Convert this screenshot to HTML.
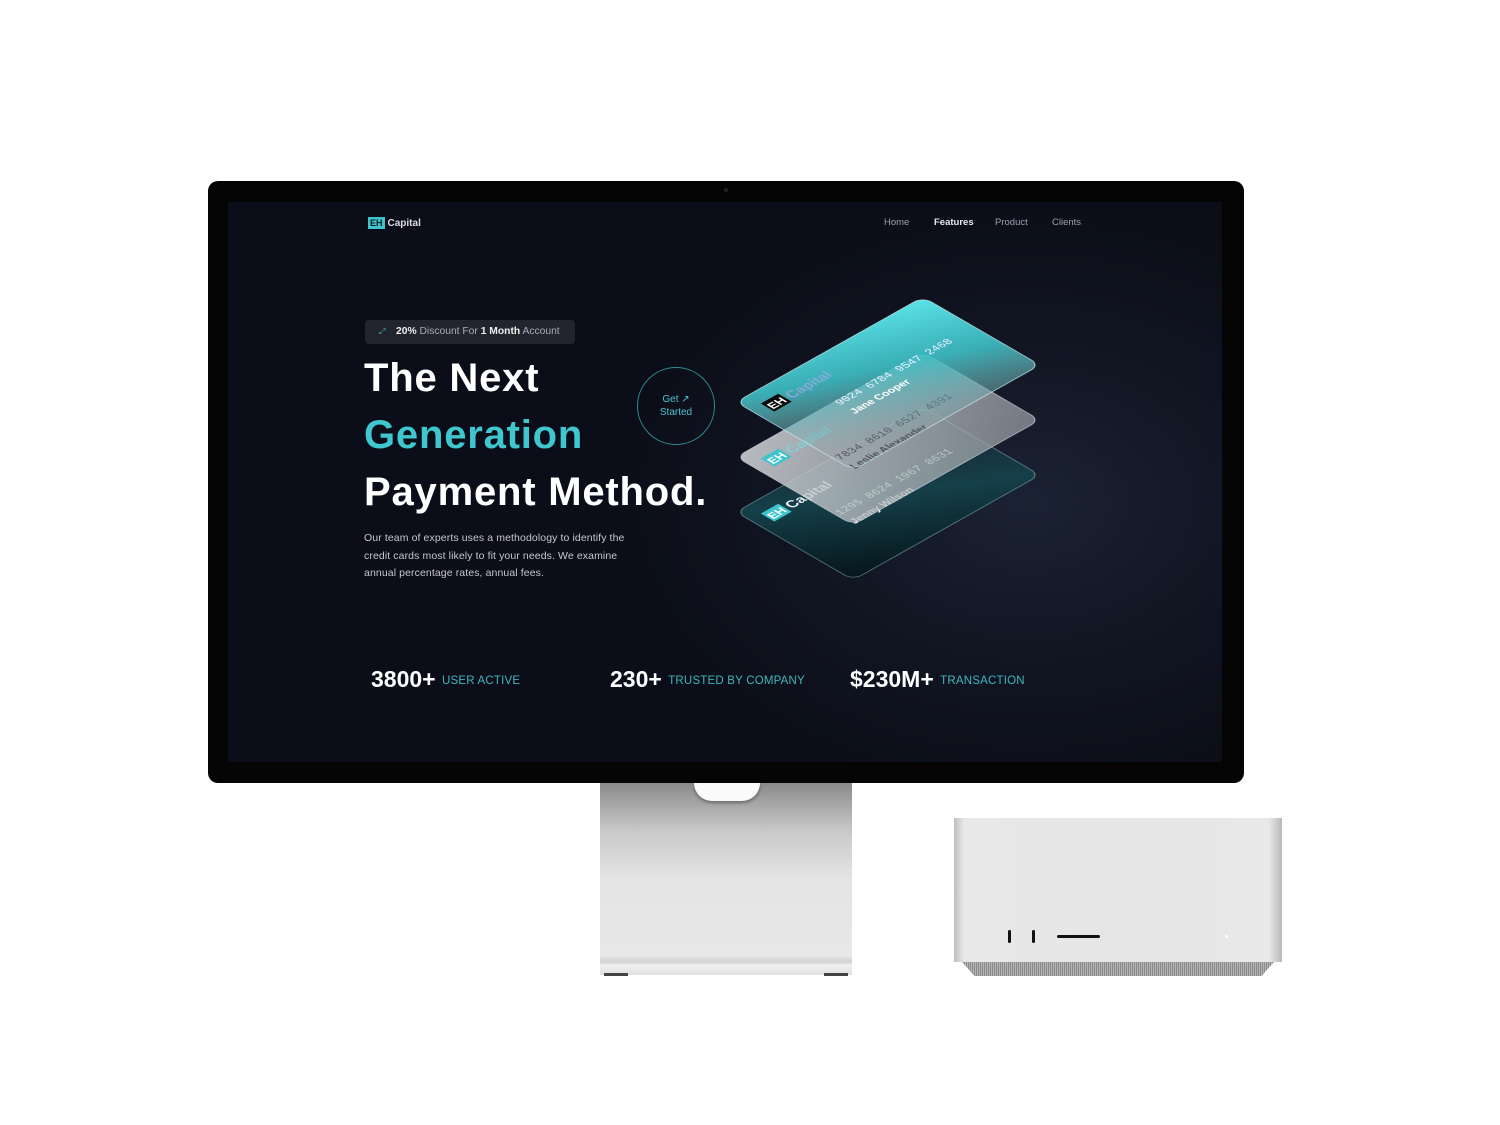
<!DOCTYPE html>
<html><head><meta charset="utf-8"><style>
*{margin:0;padding:0;box-sizing:border-box}
body{width:1500px;height:1125px;background:#fff;position:relative;overflow:hidden;font-family:"Liberation Sans",sans-serif}
.bezel{position:absolute;left:208px;top:181px;width:1036px;height:602px;background:#050505;border-radius:10px}
.screen{position:absolute;left:228px;top:202px;width:994px;height:560px;background:radial-gradient(ellipse 420px 300px at 800px 300px,#1b2233 0%,#111522 55%,#0b0e18 100%);overflow:hidden;color:#fff}
.cam{position:absolute;left:724px;top:188px;width:4px;height:4px;border-radius:50%;background:#222}
.stand{position:absolute;left:600px;top:783px;width:252px;height:192px;background:linear-gradient(#8a8a8a 0%,#c9c9c9 25%,#e4e4e4 50%,#e8e8e8 90%,#d2d2d2 93%,#f0f0f0 95%,#e0e0e0 100%)}
.hole{position:absolute;left:694px;top:783px;width:66px;height:18px;border-radius:0 0 33px 33px;background:#fafafa;box-shadow:0 2px 3px rgba(0,0,0,0.35)}
.foot{position:absolute;top:973px;width:24px;height:3px;background:#444}
.studio{position:absolute;left:954px;top:818px;width:328px;height:144px;background:linear-gradient(90deg,#bdbdbd 0%,#e8e8e8 3%,#e6e6e7 50%,#e8e8e8 96%,#b8b8b8 100%)}
.grill{position:absolute;left:962px;top:962px;width:312px;height:14px;background:repeating-linear-gradient(90deg,#8a8a8a 0 1px,#b5b5b5 1px 2px);clip-path:polygon(0 0,100% 0,96% 100%,4% 100%)}
.port{position:absolute;background:#111;border-radius:2px}
.abs{position:absolute}
.nav{position:absolute;top:15px;font-size:9.5px;color:#9aa0ab}
.lab{font-size:11.5px;font-weight:normal;color:#3fb6bf;vertical-align:3px;letter-spacing:0.2px}
</style></head><body>
<div class="bezel"></div>
<div class="cam"></div>
<div class="screen">
  <div class="abs" style="left:140px;top:15px;font-size:10px;font-weight:bold;color:#cfe;display:flex;align-items:center;gap:3px"><span style="background:#3fc3cc;color:#0b1a22;padding:1px 2px;font-size:9px">EH</span><span style="color:#d8dde5">Capital</span></div>
  <div class="nav" style="left:656px">Home</div>
  <div class="nav" style="left:706px;color:#e6e9ef;font-weight:bold">Features</div>
  <div class="nav" style="left:767px">Product</div>
  <div class="nav" style="left:824px">Clients</div>

  <div class="abs" style="left:137px;top:118px;width:210px;height:24px;background:#22252d;border-radius:4px;font-size:10.3px;color:#aab;line-height:24px;padding-left:31px"><span class="abs" style="left:14px;top:0;color:#3fc3cc;font-size:8px">⤢</span><b style="color:#eee">20%</b> Discount For <b style="color:#eee">1 Month</b> Account</div>
  <div class="abs" style="left:136px;top:148px;font-size:40px;font-weight:bold;line-height:57px;letter-spacing:0.8px">The Next<br><span style="color:#40c6cf">Generation</span><br>Payment Method.</div>
  <div class="abs" style="left:409px;top:165px;width:78px;height:78px;border:1.5px solid #2e8a92;border-radius:50%;color:#48c6cf;font-size:10px;text-align:center;padding-top:25px;line-height:13px">Get ↗<br>Started</div>
  <div class="abs" style="left:136px;top:328px;font-size:10.5px;line-height:17.5px;color:#c3c7cf;width:265px;letter-spacing:0.1px">Our team of experts uses a methodology to identify the credit cards most likely to fit your needs. We examine annual percentage rates, annual fees.</div>

  <div class="abs" style="left:143px;top:464px;font-size:23px;font-weight:bold">3800+ <span class="lab">USER ACTIVE</span></div>
  <div class="abs" style="left:382px;top:464px;font-size:23px;font-weight:bold">230+ <span class="lab">TRUSTED BY COMPANY</span></div>
  <div class="abs" style="left:622px;top:464px;font-size:23px;font-weight:bold">$230M+ <span class="lab">TRANSACTION</span></div>
</div>

<svg class="abs" style="left:0;top:0" width="1500" height="1125">
<defs>
<linearGradient id="g1" x1="1" y1="0" x2="0.3" y2="1"><stop offset="0" stop-color="#5be3e8"/><stop offset="0.45" stop-color="#3ec0c6" stop-opacity="0.9"/><stop offset="1" stop-color="#9aa5aa" stop-opacity="0.3"/></linearGradient>
<linearGradient id="g2" x1="0" y1="0" x2="1" y2="1"><stop offset="0" stop-color="#d6dadd" stop-opacity="0.85"/><stop offset="1" stop-color="#9aa0a6" stop-opacity="0.7"/></linearGradient>
<linearGradient id="g3" x1="0" y1="1" x2="1" y2="0"><stop offset="0" stop-color="#06141a"/><stop offset="0.5" stop-color="#154049"/><stop offset="1" stop-color="#1a2530" stop-opacity="0.6"/></linearGradient>
</defs>
<g transform="matrix(0.623,-0.35,0.616,0.358,736,512)">
<rect x="0" y="0" width="300" height="190" rx="14" fill="url(#g3)" stroke="#7fa8b0" stroke-opacity="0.6" stroke-width="1.5"/>
<rect x="18" y="22" width="28" height="22" fill="#3fc3cc"/><text x="20" y="40" font-size="17" font-weight="bold" fill="#fff">EH</text>
<text x="50" y="40" font-size="20" font-weight="bold" fill="#e8eef0">Capital</text>
<text x="80" y="88" font-size="16" fill="#dfe" font-family="Liberation Mono">1295 8624 1967 8631</text>
<text x="80" y="112" font-size="15" font-weight="bold" fill="#fff">Jenny Wilson</text>
</g>
<g transform="matrix(0.623,-0.35,0.616,0.358,736,457)">
<rect x="0" y="0" width="300" height="190" rx="14" fill="url(#g2)" stroke="#dde" stroke-opacity="0.6" stroke-width="1.5"/>
<rect x="18" y="22" width="28" height="22" fill="#3fc3cc"/><text x="20" y="40" font-size="17" font-weight="bold" fill="#fff">EH</text>
<text x="50" y="40" font-size="20" font-weight="bold" fill="#7fd0d5">Capital</text>
<text x="80" y="88" font-size="16" fill="#334" font-family="Liberation Mono">7834 8610 6527 4391</text>
<text x="80" y="112" font-size="15" font-weight="bold" fill="#334">Leslie Alexander</text>
</g>
<g transform="matrix(0.623,-0.35,0.616,0.358,736,402)">
<rect x="0" y="0" width="300" height="190" rx="14" fill="url(#g1)" stroke="#c8f0f2" stroke-opacity="0.7" stroke-width="1.5"/>
<rect x="18" y="22" width="28" height="22" fill="#0a0a0a"/><text x="20" y="40" font-size="17" font-weight="bold" fill="#fff">EH</text>
<text x="50" y="40" font-size="20" font-weight="bold" fill="#9ad" fill-opacity="0.8">Capital</text>
<text x="80" y="88" font-size="16" fill="#eef" font-family="Liberation Mono">9024 6784 9547 2468</text>
<text x="80" y="112" font-size="15" font-weight="bold" fill="#fff">Jane Cooper</text>
</g>
</svg>

<div class="stand"></div>
<div class="hole"></div>
<div class="foot" style="left:604px"></div>
<div class="foot" style="left:824px"></div>
<div class="studio"></div>
<div class="grill"></div>
<div class="port" style="left:1008px;top:930px;width:3px;height:13px"></div>
<div class="port" style="left:1032px;top:930px;width:3px;height:13px"></div>
<div class="port" style="left:1057px;top:935px;width:43px;height:3px"></div>
<div class="abs" style="left:1225px;top:935px;width:3px;height:3px;border-radius:50%;background:#fff"></div>
</body></html>
